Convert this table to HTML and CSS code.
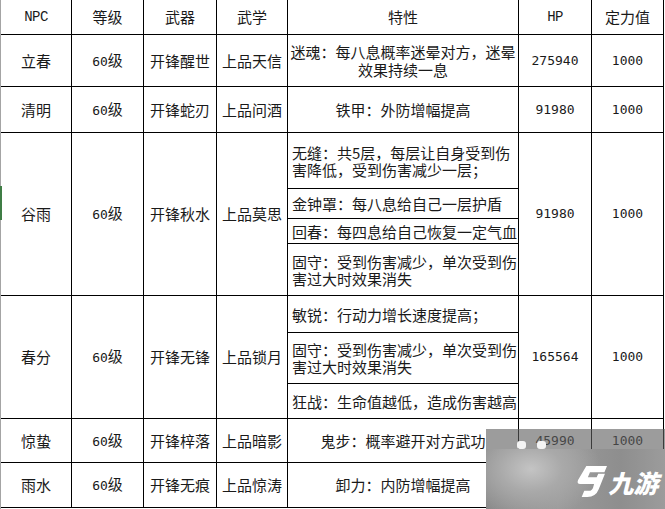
FILE: index.html
```html
<!DOCTYPE html>
<html lang="zh-CN">
<head>
<meta charset="utf-8">
<title>NPC 数据表</title>
<link rel="stylesheet" href="styles.css">
</head>
<body>
<div class="sheet">
  <div class="grid">
    <div class="c"><span class="lat">NPC</span></div>
    <div class="c">等级</div>
    <div class="c">武器</div>
    <div class="c">武学</div>
    <div class="c">特性</div>
    <div class="c"><span class="lat">HP</span></div>
    <div class="c">定力值</div>

    <div class="c">立春</div>
    <div class="c"><span><span class="num">60</span>级</span></div>
    <div class="c">开锋醒世</div>
    <div class="c">上品天信</div>
    <div class="c">迷魂：每八息概率迷晕对方，迷晕效果持续一息</div>
    <div class="c"><span class="num">275940</span></div>
    <div class="c"><span class="num">1000</span></div>

    <div class="c">清明</div>
    <div class="c"><span><span class="num">60</span>级</span></div>
    <div class="c">开锋蛇刃</div>
    <div class="c">上品问酒</div>
    <div class="c">铁甲：外防增幅提高</div>
    <div class="c"><span class="num">91980</span></div>
    <div class="c"><span class="num">1000</span></div>

    <div class="c r4">谷雨</div>
    <div class="c r4"><span><span class="num">60</span>级</span></div>
    <div class="c r4">开锋秋水</div>
    <div class="c r4">上品莫思</div>
    <div class="c sub">无缝：共5层，每层让自身受到伤害降低，受到伤害减少一层；</div>
    <div class="c r4"><span class="num">91980</span></div>
    <div class="c r4"><span class="num">1000</span></div>
    <div class="c sub">金钟罩：每八息给自己一层护盾</div>
    <div class="c sub">回春：每四息给自己恢复一定气血</div>
    <div class="c sub">固守：受到伤害减少，单次受到伤害过大时效果消失</div>

    <div class="c r3">春分</div>
    <div class="c r3"><span><span class="num">60</span>级</span></div>
    <div class="c r3">开锋无锋</div>
    <div class="c r3">上品锁月</div>
    <div class="c sub">敏锐：行动力增长速度提高；</div>
    <div class="c r3"><span class="num">165564</span></div>
    <div class="c r3"><span class="num">1000</span></div>
    <div class="c sub">固守：受到伤害减少，单次受到伤害过大时效果消失</div>
    <div class="c sub">狂战：生命值越低，造成伤害越高</div>

    <div class="c">惊蛰</div>
    <div class="c"><span><span class="num">60</span>级</span></div>
    <div class="c">开锋梓落</div>
    <div class="c">上品暗影</div>
    <div class="c">鬼步：概率避开对方武功</div>
    <div class="c"><span class="num">45990</span></div>
    <div class="c"><span class="num">1000</span></div>

    <div class="c">雨水</div>
    <div class="c"><span><span class="num">60</span>级</span></div>
    <div class="c">开锋无痕</div>
    <div class="c">上品惊涛</div>
    <div class="c">卸力：内防增幅提高</div>
    <div class="c"><span class="num">91980</span></div>
    <div class="c"><span class="num">1000</span></div>
  </div>

  <div class="mark">
    <div class="mark-top">
      <span class="blob b1"></span>
      <span class="blob b2"></span>
    </div>
    <div class="mark-body">
      <svg class="logo-g" viewBox="0 0 30 30" aria-hidden="true">
        <path d="M10 0 H30 L27.5 6 H13.5 L11.5 11 H20 L21.5 7.5 H28 L22 22.5 Q19 30 11 30 H5.5 L8 24 H12.5 Q15.5 24 16.5 21 L17.5 17.5 H4 Q0.5 17.5 2 13.5 Z" fill="#fff"/>
      </svg>
      <span class="logo-t">九游</span>
    </div>
  </div>
</div>
</body>
</html>
```

FILE: styles.css
```css
html, body {
  margin: 0;
  padding: 0;
  background: #fff;
}

body {
  width: 665px;
  height: 509px;
  overflow: hidden;
}

.sheet {
  position: relative;
  width: 664px;
  height: 509px;
  border-left: 1px solid #a4a4a4;
  font-family: "Noto Sans CJK SC", "Noto Sans", sans-serif;
  font-size: 15px;
  line-height: 18px;
  color: #1a1a1a;
}

.sheet::before {
  content: "";
  position: absolute;
  left: -1px;
  top: 186px;
  width: 2px;
  height: 34px;
  background: #3f7d45;
}

.grid {
  display: grid;
  grid-template-columns: 71px 72px 73px 71px 231px 73px 72px;
  grid-template-rows: 35px 52px 46px 56px 30px 25px 52px 37px 51px 35px 44px 45px;
}

.c {
  box-sizing: border-box;
  border-right: 1px solid #000;
  border-bottom: 1px solid #000;
  display: flex;
  align-items: center;
  justify-content: center;
  text-align: center;
  padding: 0 2px;
  overflow: hidden;
}

.r4 { grid-row: span 4; }
.r3 { grid-row: span 3; }

.sub {
  justify-content: flex-start;
  text-align: left;
  padding: 0 0 0 4px;
  line-height: 17px;
}

.lat {
  font-family: "Liberation Mono", "DejaVu Sans Mono", monospace;
  font-size: 14px;
  letter-spacing: -0.6px;
}

.num {
  font-family: "DejaVu Sans Mono", "Liberation Mono", monospace;
  font-size: 13px;
}

/* watermark overlay */
.mark {
  position: absolute;
  left: 485px;
  top: 429px;
  width: 180px;
  height: 80px;
  display: flex;
  flex-direction: column;
}

.mark-top {
  position: relative;
  height: 20px;
  background: rgba(95, 95, 95, 0.62);
}

.blob {
  position: absolute;
  top: 12px;
  width: 9px;
  height: 8px;
  border-radius: 3px;
  background: #f4f4f4;
  filter: blur(0.6px);
}
.b1 { left: 31px; }
.b2 { left: 51px; }

.mark-body {
  flex: 1;
  display: flex;
  align-items: center;
  justify-content: flex-end;
  gap: 4px;
  padding-right: 5px;
  background:
    radial-gradient(ellipse 70px 50px at 45px 20px, #c4c4c4 0%, #a9a9a9 45%, rgba(150,150,150,0) 100%),
    linear-gradient(90deg, #8a8a8a 0%, #9a9a9a 40%, #8e8e8e 75%, #9c9c9c 100%);
}

.logo-g {
  width: 31px;
  height: 31px;
  margin-top: 4px;
}

.logo-t {
  color: #fff;
  font-family: "Noto Sans CJK SC", sans-serif;
  font-weight: 900;
  font-size: 25px;
  line-height: 30px;
  margin-top: 5px;
  transform: skewX(-14deg);
  letter-spacing: 0;
}
```
